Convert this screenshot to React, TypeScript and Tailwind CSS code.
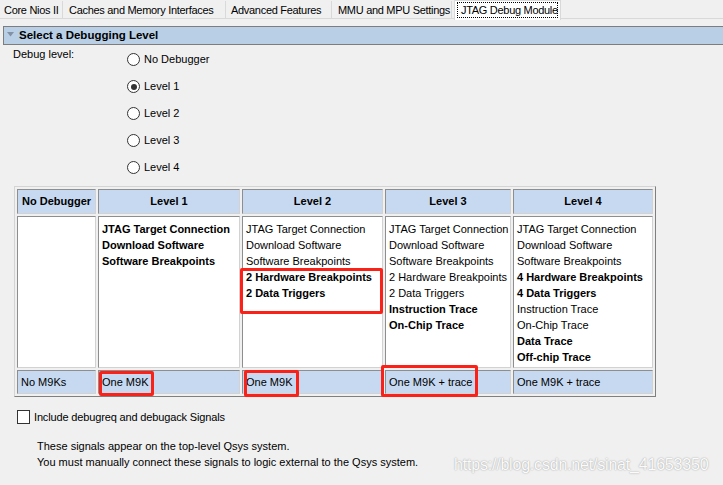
type Line = { t: string; b?: boolean };

const tabs = [
  { t: "Core Nios II", w: "w-[63px] pl-[4px]" },
  { t: "Caches and Memory Interfaces", w: "w-[163px] pl-[6px]" },
  { t: "Advanced Features", w: "w-[106px] pl-[5px]" },
  { t: "MMU and MPU Settings", w: "w-[120px] pl-[6px]" },
];

const levels = ["No Debugger", "Level 1", "Level 2", "Level 3", "Level 4"];

const base: Line[] = [
  { t: "JTAG Target Connection" },
  { t: "Download Software" },
  { t: "Software Breakpoints" },
];

const columns: { head: string; lines: Line[]; foot: string }[] = [
  { head: "No Debugger", lines: [], foot: "No M9Ks" },
  {
    head: "Level 1",
    lines: base.map((l) => ({ ...l, b: true })),
    foot: "One M9K",
  },
  {
    head: "Level 2",
    lines: [...base, { t: "2 Hardware Breakpoints", b: true }, { t: "2 Data Triggers", b: true }],
    foot: "One M9K",
  },
  {
    head: "Level 3",
    lines: [
      ...base,
      { t: "2 Hardware Breakpoints" },
      { t: "2 Data Triggers" },
      { t: "Instruction Trace", b: true },
      { t: "On-Chip Trace", b: true },
    ],
    foot: "One M9K + trace",
  },
  {
    head: "Level 4",
    lines: [
      ...base,
      { t: "4 Hardware Breakpoints", b: true },
      { t: "4 Data Triggers", b: true },
      { t: "Instruction Trace" },
      { t: "On-Chip Trace" },
      { t: "Data Trace", b: true },
      { t: "Off-chip Trace", b: true },
    ],
    foot: "One M9K + trace",
  },
];

// cell edges: dark on top/left, light on bottom/right
const cell = "border border-t-[#8e8e8e] border-l-[#8e8e8e] border-b-[#d2d2d2] border-r-[#d2d2d2]";

function Radio({ checked }: { checked?: boolean }) {
  return (
    <span className="w-[13px] h-[13px] rounded-full border border-[#333] bg-white flex items-center justify-center">
      {checked && <span className="w-[6px] h-[6px] rounded-full bg-[#333]" />}
    </span>
  );
}

export default function App() {
  return (
    <div className="relative w-[723px] h-[485px] overflow-hidden bg-[#f0f0f0] text-black text-[11px] font-['Liberation_Sans',Arial,sans-serif]">
      {/* tab strip */}
      <div className="flex h-[19px] border-b border-[#d9d9d9] tracking-[-0.3px]">
        {tabs.map((t) => (
          <div key={t.t} className={`${t.w} h-[18px] mt-[1px] flex items-center border-r border-[#d9d9d9] whitespace-nowrap overflow-hidden`}>
            {t.t}
          </div>
        ))}
        <div className="w-[107px] h-[20px] ml-[2px] pl-[2px] pt-[1px] bg-white border border-b-0 border-[#d9d9d9] relative z-10">
          <div className="w-[101px] border border-dotted border-black pl-[3px] leading-[14px] whitespace-nowrap">JTAG Debug Module</div>
        </div>
      </div>

      {/* section header */}
      <div className="ml-[3px] mt-[7px] h-[19px] flex items-center gap-[5px] pl-[3px] bg-[#b9cfe5] border border-r-0 border-[#7d7d7d]">
        <svg width="7" height="5" viewBox="0 0 7 5" className="mt-[-2px]">
          <path d="M0 0h7L3.5 4.5z" fill="#8391a6" />
        </svg>
        <span className="font-bold text-[11.5px]">Select a Debugging Level</span>
      </div>

      {/* debug level radios */}
      <div className="flex pt-[1px]">
        <div className="w-[127px] pl-[13px] pt-[1px] leading-[14px]">Debug level:</div>
        <div className="flex flex-col">
          {levels.map((l, i) => (
            <div key={l} className="h-[27px] flex items-center gap-[4px]">
              <Radio checked={i === 1} />
              <span>{l}</span>
            </div>
          ))}
        </div>
      </div>

      {/* comparison table */}
      <div className="relative ml-[14px] mt-[5px] w-[642px]">
        <div className="border border-t-[#d4d4d4] border-l-[#d4d4d4] border-b-[#7f7f7f] border-r-[#7f7f7f] p-[2px] grid grid-cols-[79px_142px_141px_126px_140px] grid-rows-[25px_152px_24px] gap-[2px]">
          {columns.map((c) => (
            <div key={c.head + "h"} className={`${cell} bg-[#c6d9f0] flex items-center justify-center font-bold`}>
              {c.head}
            </div>
          ))}
          {columns.map((c) => (
            <div key={c.head + "b"} className={`${cell} bg-white pl-[3px] pt-[4px] whitespace-nowrap overflow-hidden`}>
              {c.lines.map((l, i) => (
                <div key={i} className={`leading-[16px] ${l.b ? "font-bold" : ""}`}>
                  {l.t}
                </div>
              ))}
            </div>
          ))}
          {columns.map((c) => (
            <div key={c.head + "f"} className={`${cell} bg-[#c6d9f0] flex items-center pl-[3px]`}>
              {c.foot}
            </div>
          ))}
        </div>

        {/* red annotation boxes */}
        <div className="absolute left-[226px] top-[82px] w-[143px] h-[46px] border-[3px] border-[#fa2118] rounded-[2px]" />
        <div className="absolute left-[85px] top-[185px] w-[55px] h-[25px] border-[3px] border-[#fa2118] rounded-[2px]" />
        <div className="absolute left-[230px] top-[184px] w-[55px] h-[27px] border-[3px] border-[#fa2118] rounded-[2px]" />
        <div className="absolute left-[367px] top-[179px] w-[97px] h-[32px] border-[3px] border-[#fa2118] rounded-[2px]" />
      </div>

      {/* checkbox */}
      <div className="ml-[17px] mt-[13px] h-[14px] flex items-center gap-[4px]">
        <span className="w-[13px] h-[14px] bg-white border border-[#333]" />
        <span className="tracking-[-0.15px]">Include debugreq and debugack Signals</span>
      </div>

      <div className="ml-[37px] mt-[14px] leading-[16px]">
        <div>These signals appear on the top-level Qsys system.</div>
        <div>You must manually connect these signals to logic external to the Qsys system.</div>
      </div>

      {/* watermark */}
      <div className="absolute left-[454px] top-[453px] text-[16px] text-[#fbfbfb] tracking-[-0.2px] [text-shadow:0_0_1.5px_#8a8a8a]">
        https://blog.csdn.net/sinat_41653350
      </div>
    </div>
  );
}
